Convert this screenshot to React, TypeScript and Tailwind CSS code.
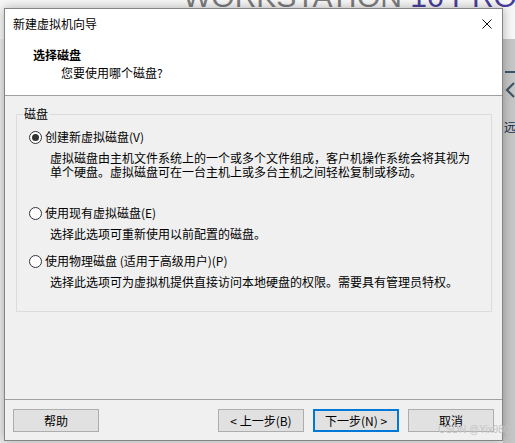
import React from "react";

function Radio({ checked, label }: { checked?: boolean; label: string }) {
  return (
    <div className="flex items-center h-[16px]">
      <span className="w-[13px] h-[13px] rounded-full border border-[#333] bg-white flex items-center justify-center shrink-0">
        {checked && <span className="w-[7px] h-[7px] rounded-full bg-[#333]" />}
      </span>
      <span className="ml-[3px] leading-[16px]">{label}</span>
    </div>
  );
}

function Btn({ children, primary }: { children: React.ReactNode; primary?: boolean }) {
  return (
    <button
      className={`w-[86px] h-[23px] bg-[#e1e1e1] flex items-center justify-center leading-[16px] ${
        primary ? "border-2 border-[#0078d7]" : "border border-[#adadad]"
      }`}
    >
      {children}
    </button>
  );
}

export default function App() {
  return (
    <div className="relative w-[515px] h-[443px] overflow-hidden bg-[#ececec] text-[12px] text-black font-['Noto_Sans_CJK_SC',sans-serif]">
      {/* desktop behind */}
      <div className="absolute left-0 top-0 w-[515px] h-[39px] bg-[#f7f7f7]" />
      <div className="absolute left-[183px] top-[-18px] whitespace-nowrap text-[30px] leading-none font-light font-['Liberation_Sans',sans-serif] text-[#7c7c7c]">
        WORKSTATION <span className="text-[#4a3f9c]">16 PRO</span>
        <span className="text-[12px] align-top">™</span>
      </div>
      <div className="absolute left-[503px] top-[39px] w-[12px] h-[404px] bg-[#c6c6c6]">
        <div className="mt-[32px] ml-[2px] w-[12px] h-[2px] bg-[#3f5566]" />
        <svg width="12" height="16" viewBox="0 0 12 16" className="mt-[9px] ml-[1px]">
          <path d="M10 1 L3 8 L10 15" fill="none" stroke="#3f5566" strokeWidth="2.2" />
        </svg>
        <div className="mt-[22px] ml-[1px] leading-[14px] text-[12px] text-[#1a2a4a]">远</div>
      </div>

      {/* dialog window */}
      <div className="absolute left-[4px] top-[8px] w-[499px] h-[433px] border border-[#858585] bg-[#f0f0f0] flex flex-col shadow-[0_0_10px_rgba(0,0,0,0.3)]">
        <div className="bg-white">
          <div className="h-[30px] flex items-center justify-between pl-[8px] pr-[10px]">
            <span className="leading-[16px]">新建虚拟机向导</span>
            <svg width="10" height="10" viewBox="0 0 10 10">
              <path d="M0.5 0.5 L9.5 9.5 M9.5 0.5 L0.5 9.5" stroke="#111" strokeWidth="1" />
            </svg>
          </div>
          <div className="pl-[28px] pt-[8px] pb-[14px]">
            <div className="font-bold leading-[16px]">选择磁盘</div>
            <div className="mt-[2px] pl-[28px] leading-[16px]">您要使用哪个磁盘?</div>
          </div>
        </div>
        <div className="h-px bg-[#a0a0a0]" />

        <div className="flex-1 pt-[18px] pl-[11px] pr-[10px]">
          <div className="relative border border-[#dcdcdc] pt-[14px] pb-[22px] pl-[12px]">
            <span className="absolute left-[6px] top-[-9px] px-[1px] bg-[#f0f0f0] leading-[16px]">磁盘</span>
            <Radio checked label="创建新虚拟磁盘(V)" />
            <div className="mt-[6px] pl-[21px] leading-[14px]">
              <div>虚拟磁盘由主机文件系统上的一个或多个文件组成，客户机操作系统会将其视为</div>
              <div>单个硬盘。虚拟磁盘可在一台主机上或多台主机之间轻松复制或移动。</div>
            </div>
            <div className="mt-[26px]">
              <Radio label="使用现有虚拟磁盘(E)" />
            </div>
            <div className="mt-[6px] pl-[21px] leading-[14px]">选择此选项可重新使用以前配置的磁盘。</div>
            <div className="mt-[12px]">
              <Radio label="使用物理磁盘 (适用于高级用户)(P)" />
            </div>
            <div className="mt-[6px] pl-[21px] leading-[14px]">
              选择此选项可为虚拟机提供直接访问本地硬盘的权限。需要具有管理员特权。
            </div>
          </div>
        </div>

        <div className="h-px bg-[#a0a0a0]" />
        <div className="flex items-center pt-[9px] pb-[8px] pl-[8px] pr-[8px]">
          <Btn>帮助</Btn>
          <div className="flex-1" />
          <div className="flex gap-[9px]">
            <Btn>&lt; 上一步(B)</Btn>
            <Btn primary>下一步(N) &gt;</Btn>
            <Btn>取消</Btn>
          </div>
        </div>
      </div>

      <div className="absolute left-[438px] top-[424px] text-[10px] leading-[12px] font-['Liberation_Sans',sans-serif] text-[#c4c4c4] whitespace-nowrap">
        CSDN @Yix9808
      </div>
    </div>
  );
}
